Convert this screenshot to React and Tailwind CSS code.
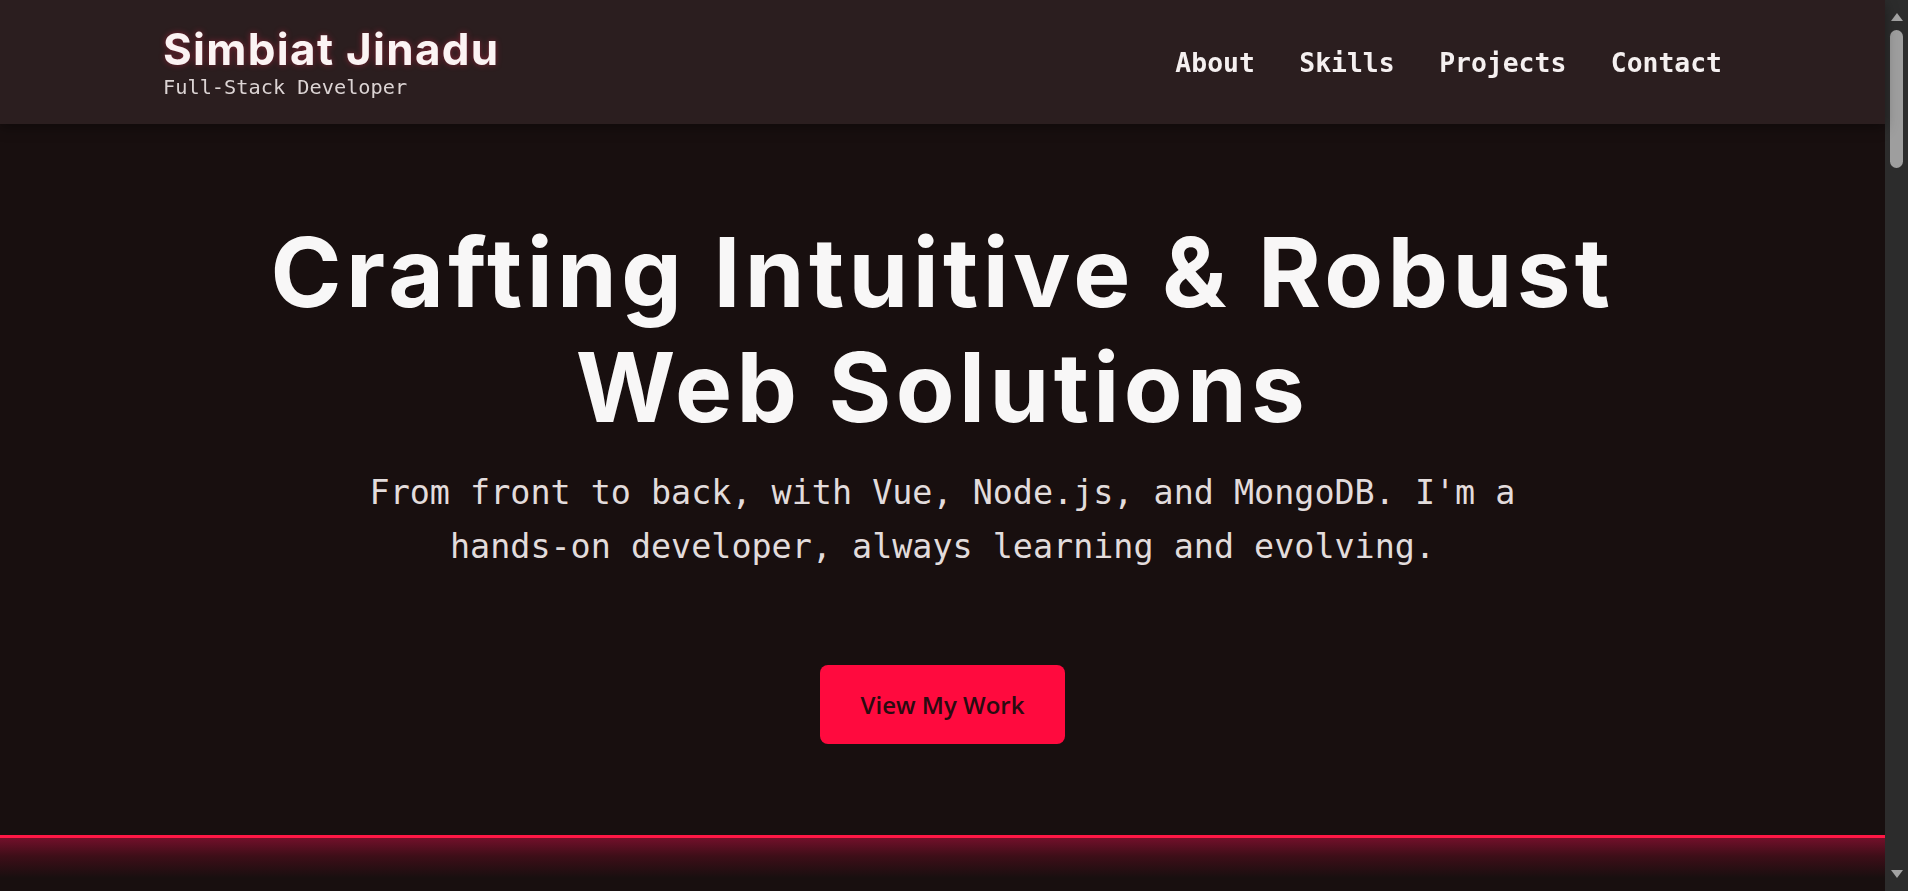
export default function App() {
  return (
    <div className="min-h-screen bg-[#180f0f] text-[#f7f3f3] pr-[23px]">
      <header className="h-[124px] bg-[#2b1e1f] flex items-center justify-between px-[163px] shadow-[0_4px_12px_rgba(0,0,0,0.35)] relative z-10">
        <div className="flex flex-col">
          <div className="font-['Inter','Noto_Sans',sans-serif] text-[44px] font-bold leading-[48px] tracking-[1.3px] text-[#fbf3f3] [text-shadow:0_0_6px_rgba(255,40,80,0.4)]">
            Simbiat Jinadu
          </div>
          <div className="font-['DejaVu_Sans_Mono','Liberation_Mono',monospace] text-[20.3px] leading-[24px] text-[#dcd4d4] mt-[2px]">
            Full-Stack Developer
          </div>
        </div>
        <nav className="flex items-center gap-[44.5px] font-['DejaVu_Sans_Mono','Liberation_Mono',monospace] text-[26.4px] font-bold text-[#f5f0f0] pt-[1px]">
          <a>About</a>
          <a>Skills</a>
          <a>Projects</a>
          <a>Contact</a>
        </nav>
      </header>

      <section className="h-[711px] flex flex-col items-center justify-center text-center">
        <h1 className="font-['Inter','Noto_Sans',sans-serif] text-[96px] leading-[115px] font-bold tracking-[4.4px] text-[#f8f7f7]">
          Crafting Intuitive &amp; Robust
          <br />
          Web Solutions
        </h1>
        <p className="font-['DejaVu_Sans_Mono','Liberation_Mono',monospace] mt-[21px] text-[33.4px] leading-[53.5px] text-[#e2dcdc]">
          From front to back, with Vue, Node.js, and MongoDB. I'm a
          <br />
          hands-on developer, always learning and evolving.
        </p>
        <button className="font-['Open_Sans','Noto_Sans',sans-serif] mt-[92px] w-[245px] h-[79px] rounded-[8px] bg-[#ff0a3e] text-[#2a0b10] text-[24px] font-semibold">
          View My Work
        </button>
      </section>

      <section className="h-[500px] border-t-[3px] border-[#ff1745] bg-[linear-gradient(to_bottom,#72102a_0px,#3e0e18_18px,#180f0f_40px)]"></section>

      <div className="fixed top-0 right-0 h-screen w-[23px] bg-[#2c2c2c] flex flex-col items-center py-[4px]">
        <svg width="14" height="10" viewBox="0 0 14 10" className="mt-[8px]">
          <path d="M7 1 L13 9 L1 9 Z" fill="#a3a3a3" />
        </svg>
        <div className="mt-[8px] w-[13px] h-[138px] rounded-full bg-[#9e9e9e]"></div>
        <div className="flex-1"></div>
        <svg width="14" height="10" viewBox="0 0 14 10" className="mb-[8px]">
          <path d="M1 1 L13 1 L7 9 Z" fill="#a3a3a3" />
        </svg>
      </div>
    </div>
  );
}
